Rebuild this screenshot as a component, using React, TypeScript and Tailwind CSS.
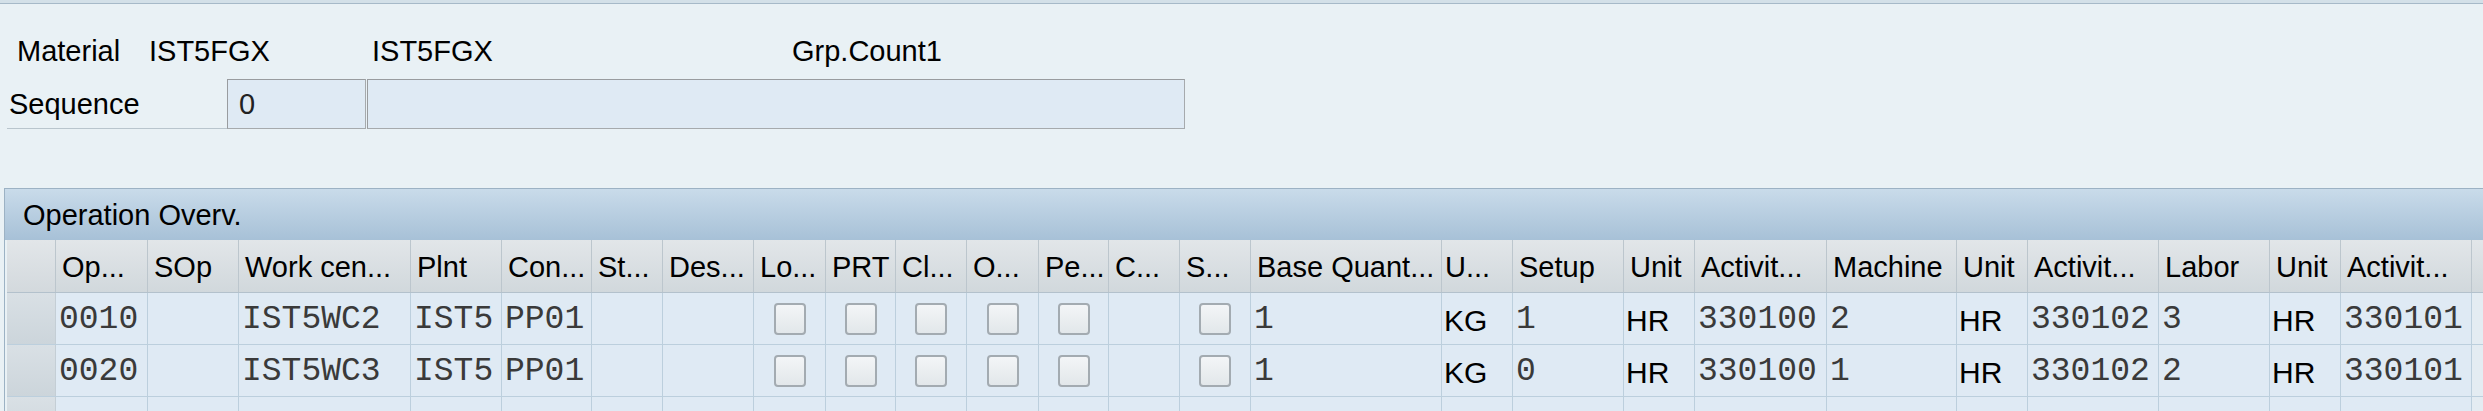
import React from "react";

type Col = { h: string; w: string; cb?: boolean; unit?: boolean; hp?: string };

const cols: Col[] = [
  { h: "Op...", w: "w-[92px]" },
  { h: "SOp", w: "w-[91px]" },
  { h: "Work cen...", w: "w-[172px]" },
  { h: "Plnt", w: "w-[91px]" },
  { h: "Con...", w: "w-[90px]" },
  { h: "St...", w: "w-[71px]" },
  { h: "Des...", w: "w-[91px]" },
  { h: "Lo...", w: "w-[72px]", cb: true },
  { h: "PRT", w: "w-[70px]", cb: true },
  { h: "Cl...", w: "w-[71px]", cb: true },
  { h: "O...", w: "w-[72px]", cb: true },
  { h: "Pe...", w: "w-[70px]", cb: true },
  { h: "C...", w: "w-[71px]" },
  { h: "S...", w: "w-[71px]", cb: true },
  { h: "Base Quant...", w: "w-[191px]" },
  { h: "U...", w: "w-[71px]", unit: true, hp: "pl-[3px]" },
  { h: "Setup", w: "w-[111px]" },
  { h: "Unit", w: "w-[71px]", unit: true },
  { h: "Activit...", w: "w-[132px]" },
  { h: "Machine", w: "w-[130px]" },
  { h: "Unit", w: "w-[71px]", unit: true },
  { h: "Activit...", w: "w-[131px]" },
  { h: "Labor", w: "w-[111px]" },
  { h: "Unit", w: "w-[71px]", unit: true },
  { h: "Activit...", w: "w-[131px]" },
];

const rows: string[][] = [
  ["0010", "", "IST5WC2", "IST5", "PP01", "", "", "", "", "", "", "", "", "", "1", "KG", "1", "HR", "330100", "2", "HR", "330102", "3", "HR", "330101"],
  ["0020", "", "IST5WC3", "IST5", "PP01", "", "", "", "", "", "", "", "", "", "1", "KG", "0", "HR", "330100", "1", "HR", "330102", "2", "HR", "330101"],
  ["", "", "", "", "", "", "", "", "", "", "", "", "", "", "", "", "", "", "", "", "", "", "", "", ""],
];

const sans = "font-['Liberation_Sans',Arial,sans-serif]";
const mono = "font-['Liberation_Mono','Courier_New',monospace]";

function Checkbox() {
  return (
    <div className="h-[32px] w-[32px] rounded-[4px] border-2 border-[#a3abb1] bg-gradient-to-b from-[#f3f5f7] to-[#e2e7ea]" />
  );
}

export default function App() {
  return (
    <div className={`h-[411px] w-[2483px] overflow-hidden bg-[#e9f1f5] text-black ${sans}`}>
      {/* top band */}
      <div className="h-[4px] border-b border-[#a6b9c8] bg-[#d3e0e8]" />

      {/* header form */}
      <div className="pt-[24px]">
        <div className="flex h-[46px] items-center text-[29px] leading-none">
          <div className="w-[149px] pl-[17px]">Material</div>
          <div className="w-[223px]">IST5FGX</div>
          <div className="w-[420px]">IST5FGX</div>
          <div>Grp.Count1</div>
        </div>
        <div className="mt-[5px] flex h-[50px] items-stretch text-[29px] leading-none">
          <div className="ml-[7px] flex w-[220px] items-center border-b border-[#b9c5cd] pl-[2px] pt-[2px]">Sequence</div>
          <div className="flex w-[139px] items-center border border-[#a6aaad] border-t-[#999c9f] border-l-[#999c9f] bg-[#dfeaf4] pl-[11px] text-[#222]">
            0
          </div>
          <div className="ml-[1px] w-[818px] border border-[#a6aaad] border-t-[#999c9f] border-l-[#999c9f] bg-[#dfeaf4]" />
        </div>
      </div>

      {/* operation overview panel */}
      <div className="ml-[4px] mt-[59px] border-l border-t border-[#9cb2c4]">
        <div className="flex h-[51px] items-center bg-gradient-to-b from-[#c9dbea] to-[#a7c1d7] pl-[18px] pt-[2px] text-[29px] leading-none">
          Operation Overv.
        </div>
        <div className="pl-[2px]">
          {/* header row */}
          <div className="flex h-[53px] w-max min-w-full border-b border-[#b3c1cc]">
            <div className="w-[49px] shrink-0 border-r border-[#bcc6cd] bg-gradient-to-b from-[#e2e6e9] to-[#d3d9dd]" />
            {cols.map((c, i) => (
              <div
                key={i}
                className={`${c.w} ${c.hp ?? "pl-[6px]"} flex shrink-0 items-center overflow-hidden whitespace-nowrap border-r border-[#bcc6cd] bg-gradient-to-b from-[#e2e6e9] to-[#d1d8dc] pt-[3px] text-[29px] leading-none`}
              >
                {c.h}
              </div>
            ))}
            <div className="flex-1 bg-gradient-to-b from-[#e2e6e9] to-[#d1d8dc]" />
          </div>
          {rows.map((r, ri) => (
            <div key={ri} className="flex h-[52px] w-max min-w-full border-b border-[#bccfdd]">
              <div className="w-[49px] shrink-0 border-r border-[#c4ced5] bg-gradient-to-b from-[#d9e0e5] to-[#ccd5db]" />
              {cols.map((c, ci) => (
                <div
                  key={ci}
                  className={`${c.w} flex shrink-0 items-center overflow-hidden whitespace-nowrap border-r border-[#bccfdd] bg-[#dfeaf4] ${
                    c.cb ? "justify-center" : c.unit ? "pl-[2px] pt-[4px]" : "pl-[3px] pt-[1px]"
                  }`}
                >
                  {c.cb && ri < 2 ? (
                    <Checkbox />
                  ) : c.unit ? (
                    <span className={`${sans} text-[30px] leading-none text-black`}>{r[ci]}</span>
                  ) : (
                    <span className={`${mono} text-[33px] leading-none text-[#3a3a3a]`}>{r[ci]}</span>
                  )}
                </div>
              ))}
              <div className="flex-1 bg-[#e4ecf2]" />
            </div>
          ))}
        </div>
      </div>
    </div>
  );
}
